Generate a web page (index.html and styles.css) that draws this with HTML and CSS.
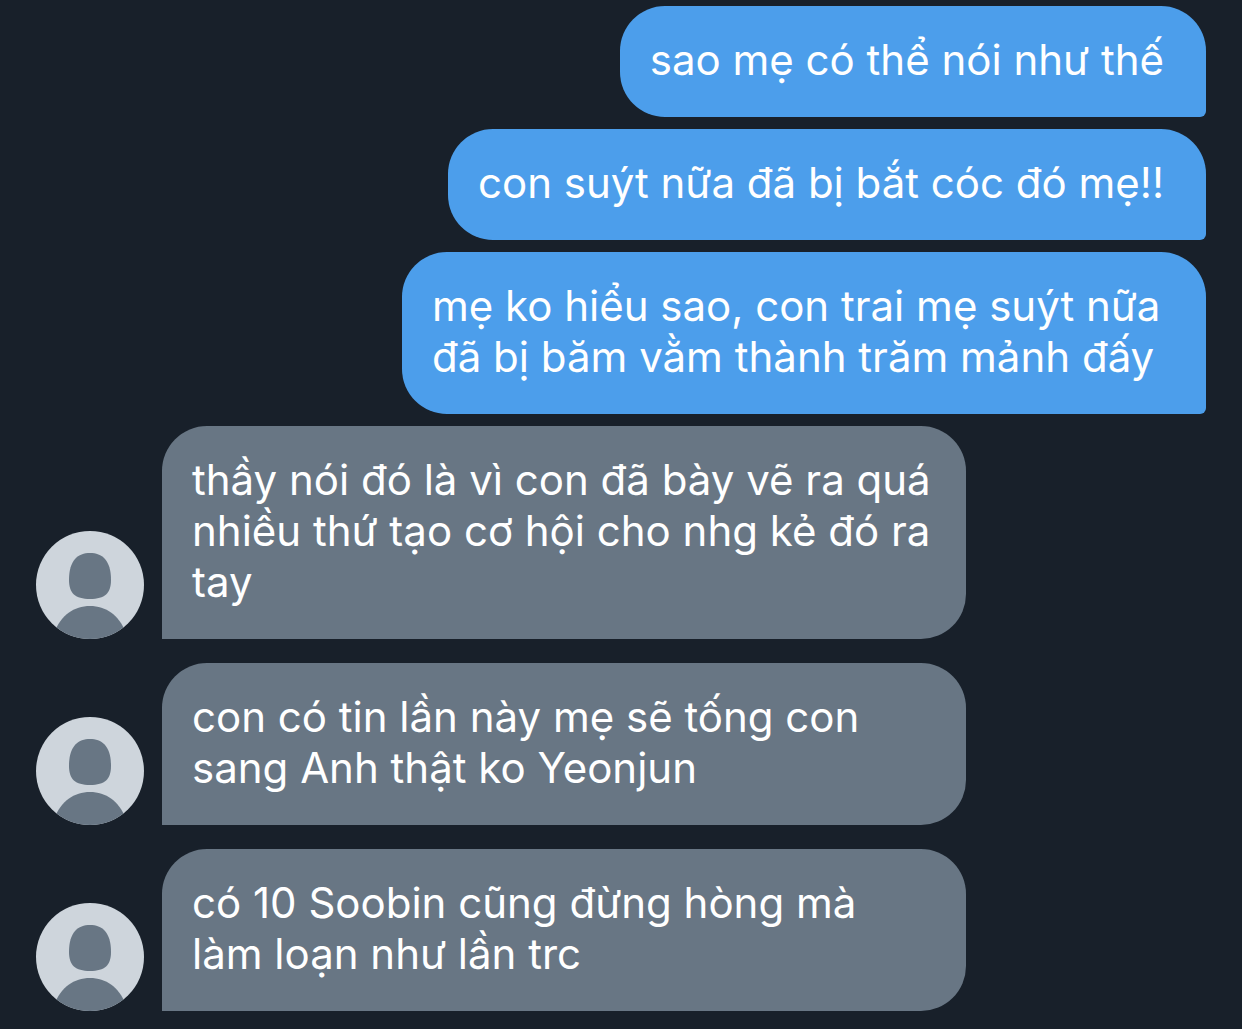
FILE: index.html
```html
<!DOCTYPE html>
<html lang="vi">
<head>
<meta charset="utf-8">
<meta name="viewport" content="width=device-width, initial-scale=1">
<title>Tin nhắn</title>
<link rel="stylesheet" href="styles.css">
</head>
<body>
<svg class="defs" aria-hidden="true">
  <symbol id="avatar" viewBox="0 0 108 108">
    <clipPath id="disc"><circle cx="54" cy="54" r="54"/></clipPath>
    <g clip-path="url(#disc)">
      <rect width="108" height="108" fill="#ced5dc"/>
      <path d="M54 22C66 22 75 29 75 49C75 62 69 68 54 68C39 68 33 62 33 49C33 29 42 22 54 22Z" fill="#687684"/>
      <path d="M18 102C25 84 38 75 54 75C70 75 83 84 90 102V108H18Z" fill="#687684"/>
    </g>
  </symbol>
</svg>
<main class="chat">
  <div class="row sent"><p class="bubble">sao mẹ có thể nói như thế</p></div>
  <div class="row sent"><p class="bubble">con suýt nữa đã bị bắt cóc đó mẹ!!</p></div>
  <div class="row sent"><p class="bubble">mẹ ko hiểu sao, con trai mẹ suýt nữa đã bị băm vằm thành trăm mảnh đấy</p></div>
  <div class="row received">
    <svg class="avatar" aria-hidden="true"><use href="#avatar"/></svg>
    <p class="bubble">thầy nói đó là vì con đã bày vẽ ra quá<br>nhiều thứ tạo cơ hội cho nhg kẻ đó ra<br>tay</p>
  </div>
  <div class="row received">
    <svg class="avatar" aria-hidden="true"><use href="#avatar"/></svg>
    <p class="bubble">con có tin lần này mẹ sẽ tống con<br>sang Anh thật ko Yeonjun</p>
  </div>
  <div class="row received">
    <svg class="avatar" aria-hidden="true"><use href="#avatar"/></svg>
    <p class="bubble">có 10 Soobin cũng đừng hòng mà<br>làm loạn như lần trc</p>
  </div>
</main>
</body>
</html>
```
FILE: styles.css
```css
* {
  box-sizing: border-box;
}

body {
  margin: 0;
  background: #18202a;
  color: #fff;
  font: 42px/51px Inter, "Noto Sans", sans-serif;
}

.defs {
  position: absolute;
  width: 0;
  height: 0;
}

.chat {
  display: flex;
  flex-direction: column;
  gap: 12px;
  padding: 6px 36px 18px;
}

.row {
  display: flex;
  align-items: flex-end;
  gap: 18px;
}

.sent {
  justify-content: flex-end;
}

.received + .received {
  margin-top: 12px;
}

.bubble {
  margin: 0;
  max-width: 804px;
  padding: 28px 30px 32px;
  border-radius: 45px;
}

.sent .bubble {
  padding-right: 42px;
  background: #4c9eeb;
  border-bottom-right-radius: 6px;
}

.received .bubble {
  width: 804px;
  background: #687684;
  border-bottom-left-radius: 0;
}

.avatar {
  flex: none;
  width: 108px;
  height: 108px;
}
```
